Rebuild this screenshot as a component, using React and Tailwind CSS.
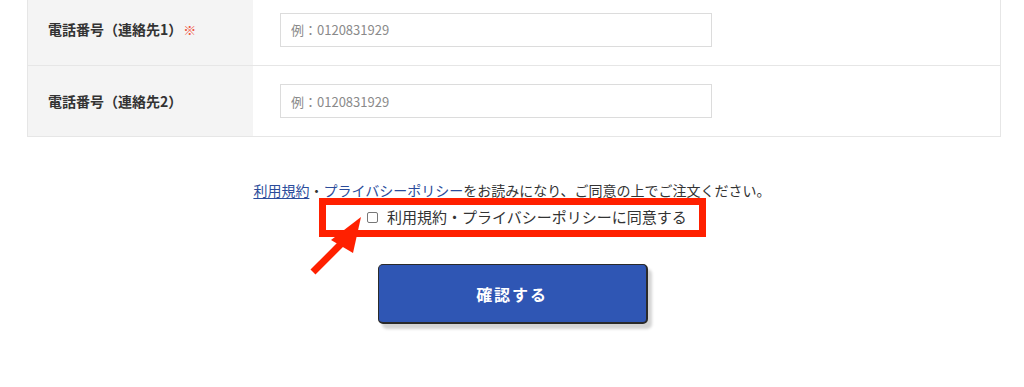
const FONT = { fontFamily: '"Noto Sans CJK JP", "Noto Sans", sans-serif' };

const rows = [
  { label: "電話番号（連絡先1）", required: true },
  { label: "電話番号（連絡先2）", required: false },
];

export default function App() {
  return (
    <div className="relative w-[1024px] h-[387px] overflow-hidden bg-white text-[#333]" style={FONT}>
      {/* form table, top row cut off by the screenshot */}
      <div className="ml-[27px] mt-[-6px] w-[974px] border-x border-b border-[#e6e6e6]">
        {rows.map((r, i) => (
          <div key={i} className={`flex h-[71px] ${i > 0 ? "border-t border-[#e6e6e6]" : ""}`}>
            <div className="w-[225px] shrink-0 bg-[#f4f4f4] flex items-center pl-[20px] text-[14px] font-bold text-[#333]">
              {r.label}
              {r.required && <span className="ml-[1px] text-[#f0523c] font-normal text-[13px]">※</span>}
            </div>
            <div className="flex items-center pl-[27px]">
              <input
                type="text"
                placeholder="例：0120831929"
                className="w-[432px] h-[34px] border border-[#dcdcdc] px-[10px] text-[13px] placeholder:text-[#8a8a8a] outline-none"
                style={FONT}
              />
            </div>
          </div>
        ))}
      </div>

      {/* agreement */}
      <div className="mt-[46px] flex flex-col items-center">
        <p className="text-[14px] leading-[15px] text-[#333]">
          <a className="text-[#2b4c9b] underline underline-offset-2">利用規約</a>
          <span>・</span>
          <a className="text-[#2b4c9b] underline underline-offset-2">プライバシーポリシー</a>
          をお読みになり、ご同意の上でご注文ください。
        </p>
        <div className="ml-[1px] w-[387px] h-[39px] border-[7px] border-[#ff2000] flex items-center pl-[41px]">
          <label className="flex items-center gap-[9px] text-[15px] text-[#333]">
            <span className="w-[11px] h-[11px] border border-[#777] rounded-[2px] bg-white" />
            利用規約・プライバシーポリシーに同意する
          </label>
        </div>

        <button
          className="mt-[27px] ml-[1px] w-[270px] h-[60px] rounded-[5px] bg-[#2f56b4] border border-[#2a2a2a] border-r-2 border-b-2 text-white text-[16px] font-bold tracking-[0.12em] shadow-[4px_5px_3px_#d4d4d4]"
          style={FONT}
        >
          確認する
        </button>
      </div>

      {/* annotation arrow */}
      <svg className="absolute left-0 top-0 pointer-events-none" width="1024" height="387">
        <line x1="313" y1="272" x2="343" y2="242" stroke="#ff2000" strokeWidth="7" />
        <polygon points="361,217 331,240 353,253" fill="#ff2000" />
      </svg>
    </div>
  );
}
